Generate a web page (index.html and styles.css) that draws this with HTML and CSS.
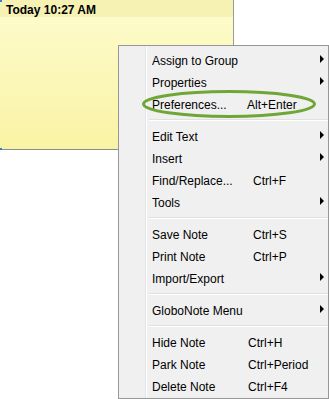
FILE: index.html
```html
<!DOCTYPE html>
<html lang="en">
<head>
    <meta charset="UTF-8">
    <meta name="viewport" content="width=device-width, initial-scale=1.0">
    <title>GloboNote</title>
    <link rel="stylesheet" href="styles.css">
</head>
<body>
    <div class="note">
        <div class="note-header">Today 10:27 AM</div>
        <div class="note-body"></div>
    </div>

    <ul class="menu">
        <li class="item"><span class="label">Assign to Group</span><span class="arrow"></span></li>
        <li class="item"><span class="label">Properties</span><span class="arrow"></span></li>
        <li class="item"><span class="label narrow">Preferences...</span><span class="key">Alt+Enter</span></li>
        <li class="sep"></li>
        <li class="item"><span class="label">Edit Text</span><span class="arrow"></span></li>
        <li class="item"><span class="label">Insert</span><span class="arrow"></span></li>
        <li class="item"><span class="label">Find/Replace...</span><span class="key">Ctrl+F</span></li>
        <li class="item"><span class="label">Tools</span><span class="arrow"></span></li>
        <li class="sep"></li>
        <li class="item"><span class="label">Save Note</span><span class="key">Ctrl+S</span></li>
        <li class="item"><span class="label">Print Note</span><span class="key">Ctrl+P</span></li>
        <li class="item"><span class="label">Import/Export</span><span class="arrow"></span></li>
        <li class="sep"></li>
        <li class="item"><span class="label">GloboNote Menu</span><span class="arrow"></span></li>
        <li class="sep"></li>
        <li class="item"><span class="label mid">Hide Note</span><span class="key">Ctrl+H</span></li>
        <li class="item"><span class="label mid">Park Note</span><span class="key">Ctrl+Period</span></li>
        <li class="item"><span class="label mid">Delete Note</span><span class="key">Ctrl+F4</span></li>
    </ul>

    <svg class="highlight" width="180" height="34" viewBox="0 0 180 34">
        <ellipse cx="89" cy="17" rx="85.5" ry="12.5" fill="none" stroke="#6fa637" stroke-width="3"/>
    </svg>
</body>
</html>
```

FILE: styles.css
```css
body {
    margin: 0;
    background: #fff;
    font-family: "Liberation Sans", Arial, sans-serif;
    font-size: 12px;
    color: #000;
}
.note {
    width: 233px;
    height: 149px;
    display: flex;
    flex-direction: column;
    border-right: 1px solid #9a9a9a;
    border-bottom: 1px solid #8c8c8c;
    position: relative;
}
.note::before,
.note::after {
    content: "";
    position: absolute;
    left: 0;
    width: 2px;
    height: 2px;
    background: #3a7bd5;
}
.note::before {
    top: 0;
}
.note::after {
    bottom: -1px;
}
.note-header {
    height: 17px;
    line-height: 21px;
    padding-left: 6px;
    font-weight: bold;
    background: #f6f2b4;
}
.note-body {
    flex: 1;
    background: linear-gradient(#fdfbc9, #f9f3a4);
}
.menu {
    position: absolute;
    left: 118px;
    top: 45px;
    width: 209px;
    margin: 0;
    padding: 2px 0;
    list-style: none;
    background-color: #f0f0f0;
    background-image: linear-gradient(to right, transparent 26px, #e2e3e3 26px, #e2e3e3 27px, #fff 27px, #fff 28px, transparent 28px);
    border: 1px solid #979797;
}
.item {
    display: flex;
    align-items: center;
    height: 22px;
    padding-left: 33px;
    padding-right: 4px;
}
.label,
.key {
    padding-top: 3px;
    white-space: nowrap;
}
.label {
    width: 101px;
}
.label.narrow {
    width: 95px;
}
.label.mid {
    width: 96px;
}
.arrow {
    margin-left: auto;
    width: 0;
    height: 0;
    border-left: 4px solid #000;
    border-top: 4px solid transparent;
    border-bottom: 4px solid transparent;
}
.sep {
    height: 1px;
    margin: 5px 0 3px 30px;
    background: #e0e0e0;
    border-bottom: 1px solid #fff;
}
.highlight {
    position: absolute;
    left: 140px;
    top: 87px;
}
```
